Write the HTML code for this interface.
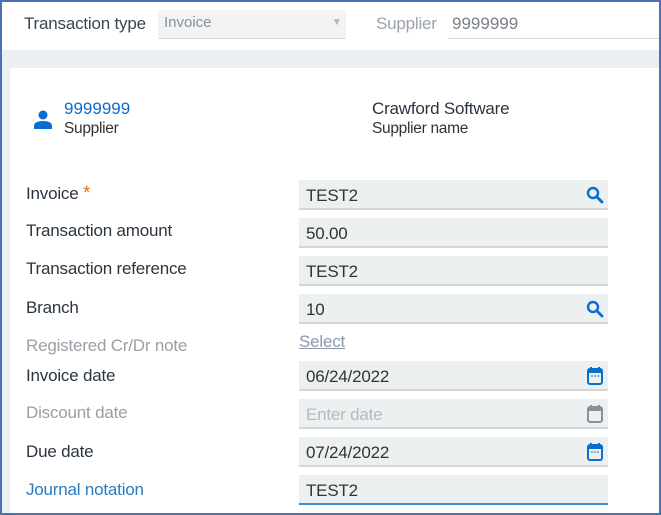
<!DOCTYPE html>
<html><head><style>
body{margin:0;width:661px;height:515px;overflow:hidden;font-family:"Liberation Sans",sans-serif;background:#fff;position:relative}
#frame{position:absolute;left:0;top:0;width:657px;height:511px;border:2px solid #4a72b3;}
.a{position:absolute;white-space:nowrap}
.lbl{position:absolute;left:26px;font-size:17px;color:#2b3540;line-height:18px;letter-spacing:-0.2px}
.dis{color:#9aa0a6}
.f{position:absolute;left:299px;width:309px;height:30px;background:#edf0f1;border-bottom:2px solid #d3d6d8;box-sizing:border-box;font-size:17px;color:#333;line-height:31px;padding-left:7px;letter-spacing:-0.2px}
.ic{position:absolute;right:4px;top:6px}
</style></head><body>
<div id="frame"></div>
<div class="a" style="left:2px;top:50px;width:657px;height:18px;background:#e9eff3"></div>
<div class="a" style="left:2px;top:68px;width:8px;height:445px;background:#e9eff3"></div>
<div class="a" style="left:24px;top:14px;font-size:17px;color:#3a4550;letter-spacing:-0.2px">Transaction type</div>
<div class="a" style="left:158px;top:10px;width:188px;height:28px;background:#f2f3f4;border-bottom:1px solid #d6d8da"></div>
<div class="a" style="left:164px;top:14px;font-size:15px;color:#8a9096">Invoice</div>
<div class="a" style="left:332px;top:17px;font-size:10px;color:#b0b4b8">▼</div>
<div class="a" style="left:376px;top:14px;font-size:17px;color:#9aa2aa;letter-spacing:-0.2px">Supplier</div>
<div class="a" style="left:448px;top:10px;width:211px;height:28px;border-bottom:1px solid #d6d8da"></div>
<div class="a" style="left:452px;top:14px;font-size:17px;color:#7a8088">9999999</div>
<svg class="a" style="left:32px;top:108px" width="22" height="22" viewBox="0 0 22 22"><circle cx="11" cy="7" r="4.5" fill="#0a6ed1"/><path d="M2 21v-3c0-3 3-5 9-5s9 2 9 5v3z" fill="#0a6ed1"/></svg>
<div class="a" style="left:64px;top:99px;font-size:17px;color:#0a6ed1">9999999</div>
<div class="a" style="left:64px;top:120px;font-size:15.5px;color:#333;letter-spacing:-0.3px">Supplier</div>
<div class="a" style="left:372px;top:99px;font-size:17px;color:#2b3540;letter-spacing:-0.2px">Crawford Software</div>
<div class="a" style="left:372px;top:120px;font-size:15.5px;color:#333;letter-spacing:-0.3px">Supplier name</div>

<div class="lbl" style="top:185px">Invoice <span style="color:#e9730c;font-size:19px">*</span></div>
<div class="lbl" style="top:222px">Transaction amount</div>
<div class="lbl" style="top:260px">Transaction reference</div>
<div class="lbl" style="top:299px">Branch</div>
<div class="lbl dis" style="top:337px">Registered Cr/Dr note</div>
<div class="lbl" style="top:367px">Invoice date</div>
<div class="lbl dis" style="top:404px">Discount date</div>
<div class="lbl" style="top:443px">Due date</div>
<div class="lbl" style="top:481px;color:#2a7ac0">Journal notation</div>

<svg width="0" height="0" style="position:absolute"><defs>
<g id="s"><circle cx="7" cy="7" r="5" fill="none" stroke="#0a6ed1" stroke-width="2.4"/><path d="M10.5 10.5L16 16" stroke="#0a6ed1" stroke-width="2.8" stroke-linecap="round"/></g>
</defs></svg>
<div class="f" style="top:180px">TEST2<svg class="ic" width="18" height="18"><use href="#s"/></svg></div>
<div class="f" style="top:218px">50.00</div>
<div class="f" style="top:256px">TEST2</div>
<div class="f" style="top:294px">10<svg class="ic" width="18" height="18"><use href="#s"/></svg></div>
<div class="a" style="left:299px;top:332px;font-size:17px;color:#8a9aa8;text-decoration:underline;letter-spacing:-0.2px">Select</div>
<div class="f" style="top:361px">06/24/2022<svg class="ic" style="top:5px" width="18" height="20" viewBox="0 0 18 20"><rect x="2" y="3" width="14" height="15" rx="2" fill="none" stroke="#0a6ed1" stroke-width="2"/><rect x="2" y="3" width="14" height="4" fill="#0a6ed1"/><path d="M5 1v4M13 1v4" stroke="#0a6ed1" stroke-width="2"/><path d="M5 10h8" stroke="#0a6ed1" stroke-dasharray="2 1"/></svg></div>
<div class="f" style="top:399px;color:#b4babe">Enter date<svg class="ic" style="top:5px" width="18" height="20" viewBox="0 0 18 20"><rect x="2" y="3" width="14" height="15" rx="2" fill="none" stroke="#8a9096" stroke-width="2"/><rect x="2" y="3" width="14" height="4" fill="#8a9096"/><path d="M5 1v4M13 1v4" stroke="#8a9096" stroke-width="2"/></svg></div>
<div class="f" style="top:437px">07/24/2022<svg class="ic" style="top:5px" width="18" height="20" viewBox="0 0 18 20"><rect x="2" y="3" width="14" height="15" rx="2" fill="none" stroke="#0a6ed1" stroke-width="2"/><rect x="2" y="3" width="14" height="4" fill="#0a6ed1"/><path d="M5 1v4M13 1v4" stroke="#0a6ed1" stroke-width="2"/><path d="M5 10h8" stroke="#0a6ed1" stroke-dasharray="2 1"/></svg></div>
<div class="f" style="top:475px;border-bottom-color:#3c8fd0">TEST2</div>
</body></html>
